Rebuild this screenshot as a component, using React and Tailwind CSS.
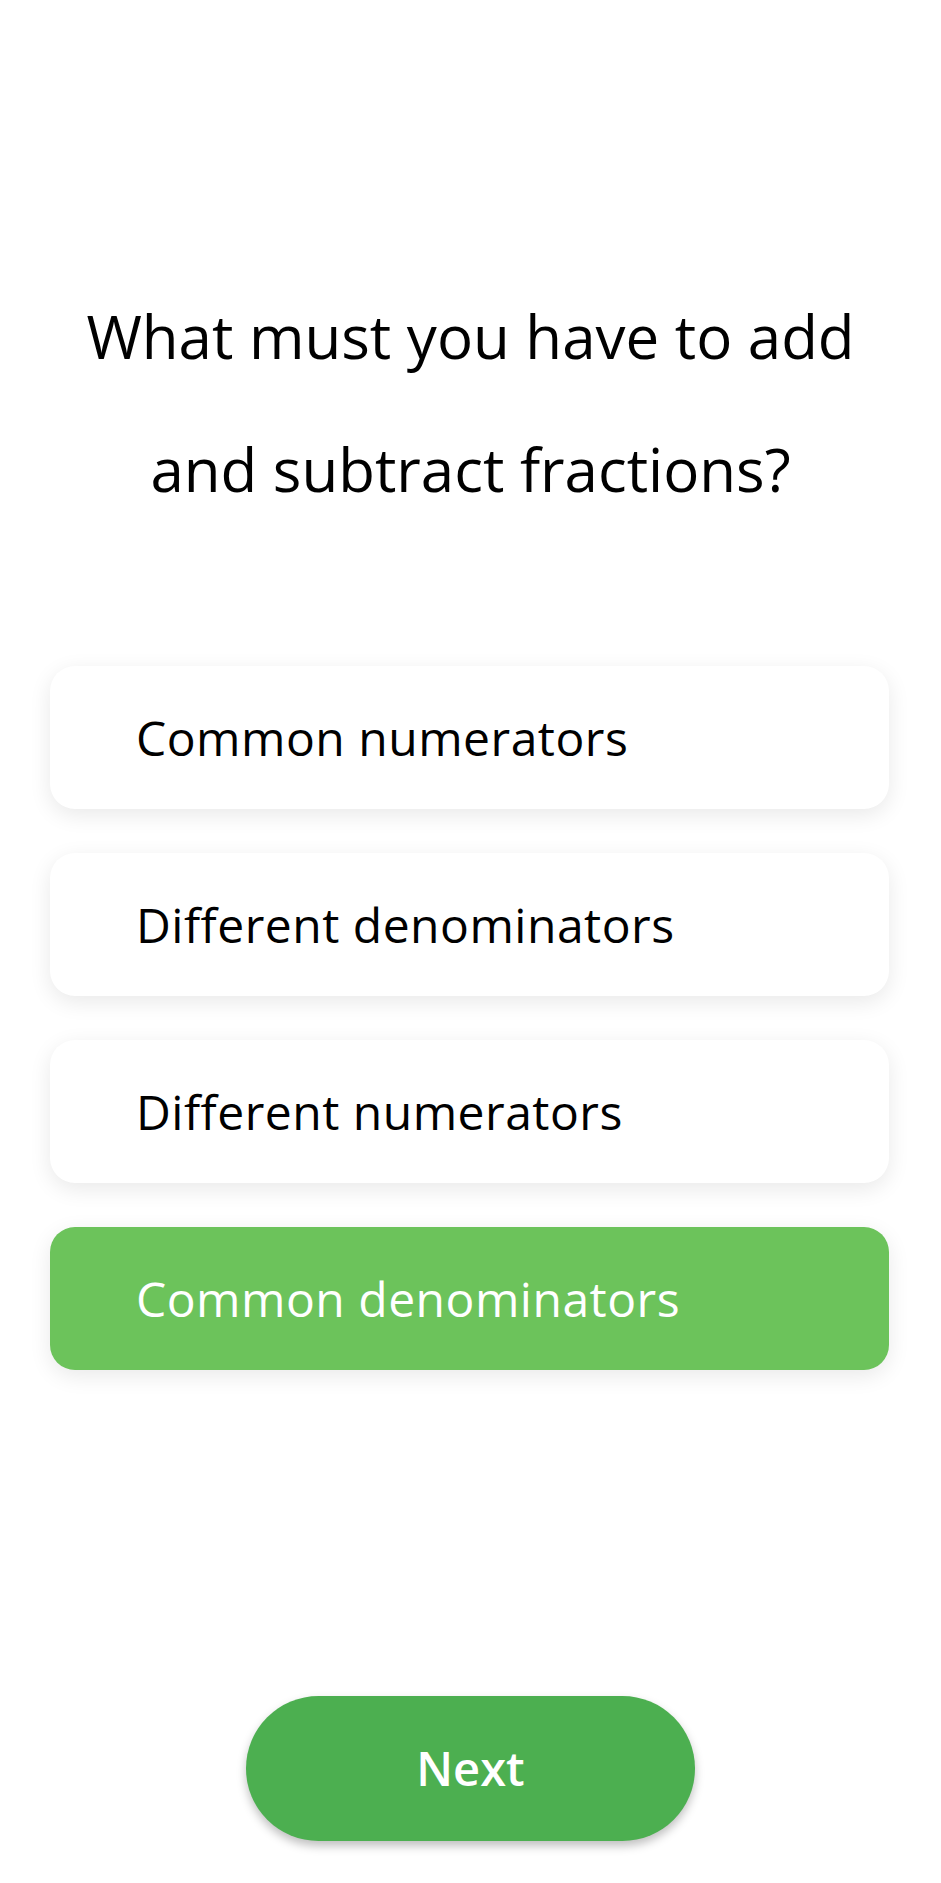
import React, { useState } from 'react';

const options = ['Common numerators', 'Different denominators', 'Different numerators', 'Common denominators'];

export default function App() {
  const [selected, setSelected] = useState(3);

  return (
    <div className="flex min-h-[1883px] w-full flex-col bg-white font-['Open_Sans',sans-serif] text-black">
      <h1 className="mx-auto mt-[270px] w-[860px] text-center text-[60px] font-normal leading-[133px]">
        What must you have to add and subtract fractions?
      </h1>

      <div className="mt-[130px] ml-[50px] mr-[52px] flex flex-col gap-[44px]">
        {options.map((option, index) => (
          <button
            key={option}
            type="button"
            onClick={() => setSelected(index)}
            className={`flex h-[143px] items-center rounded-[25px] pl-[86px] text-left text-[48px] tracking-[0.5px] shadow-[0_6px_22px_rgba(0,0,0,0.09)] ${
              selected === index ? 'bg-[#6cc35b] text-white' : 'bg-white text-black'
            }`}
          >
            {option}
          </button>
        ))}
      </div>

      <div className="mt-auto mb-[42px] flex justify-center">
        <button
          type="button"
          className="h-[145px] w-[449px] rounded-full bg-[#4caf50] text-[47px] font-semibold text-white shadow-[0_5px_10px_rgba(0,0,0,0.25)]"
        >
          Next
        </button>
      </div>
    </div>
  );
}
